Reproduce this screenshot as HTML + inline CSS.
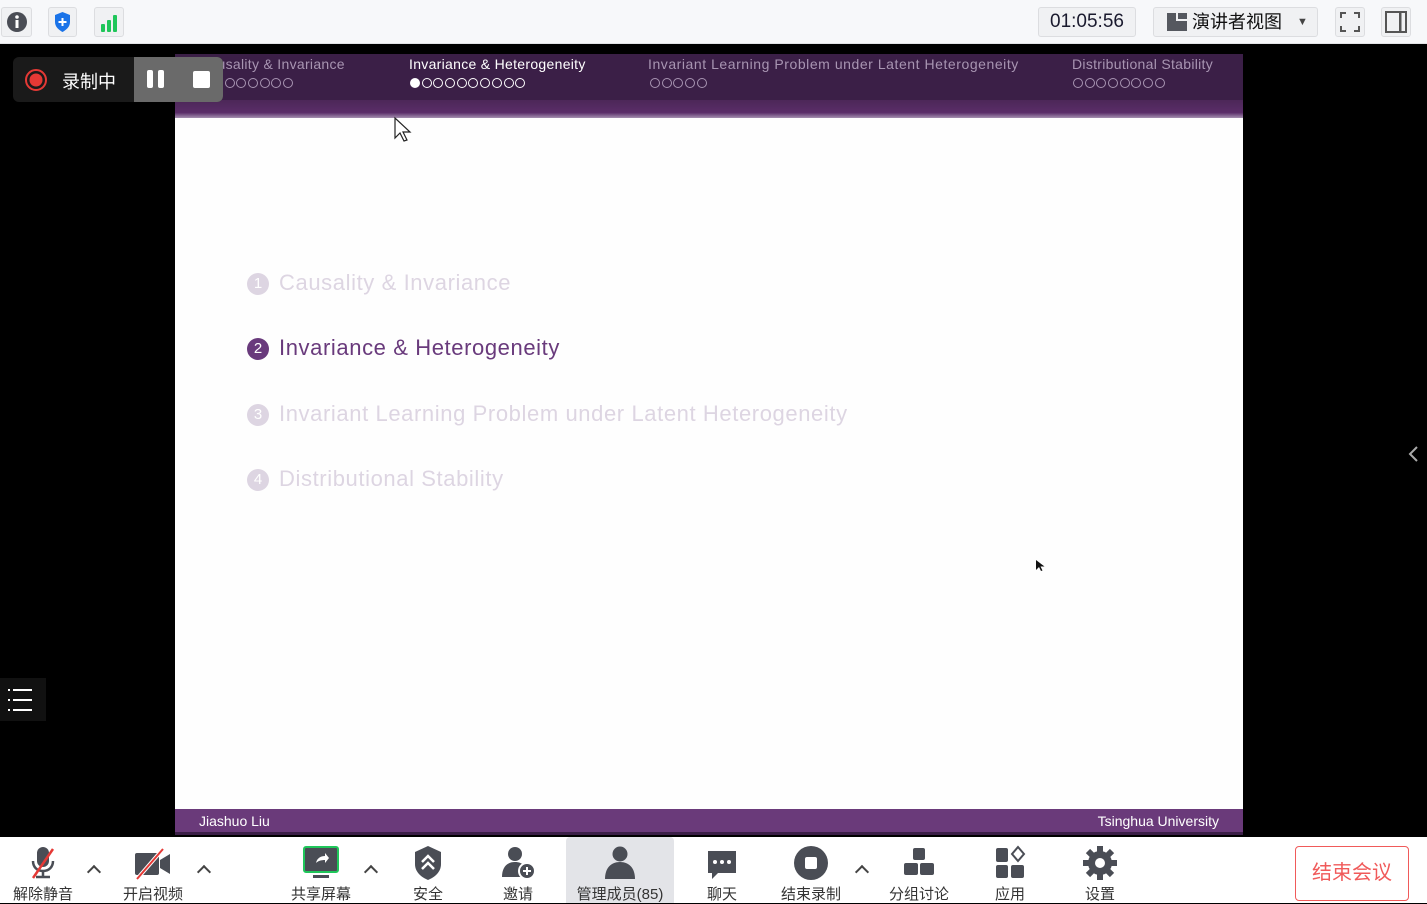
<!DOCTYPE html>
<html><head><meta charset="utf-8"><style>
*{margin:0;padding:0;box-sizing:border-box}
body{width:1427px;height:903px;overflow:hidden;background:#000;font-family:"Liberation Sans","Noto Sans CJK SC",sans-serif;position:relative}
.abs{position:absolute}
#top{left:0;top:0;width:1427px;height:44px;background:#f7f8fa;border-bottom:1px solid #e2e3e6}
.tb{position:absolute;top:7px;height:30px;border:1px solid #dcdde0;background:#f0f1f3;border-radius:3px}
#slide{left:175px;top:54px;width:1068px;height:781px;background:#fefefe}
#hdr{left:0;top:0;width:1068px;height:46px;background:#3b1f47}
#band{left:0;top:46px;width:1068px;height:18px;background:linear-gradient(#4c2758,#5a2d68 70%,#a58fb0)}
.sec{position:absolute;top:2px;font-size:14px;color:#a895b2;letter-spacing:.3px;white-space:nowrap}
.dots{position:absolute;top:24px;height:10px;white-space:nowrap;font-size:0}
.dots i{display:inline-block;width:10px;height:10px;border:1px solid #a895b2;border-radius:50%;margin-right:1.7px}
.dots.w i{border-color:#fff}
.dots.w i.f{background:#fff}
.it{position:absolute;left:104px;font-size:22px;color:#ddd5e2;letter-spacing:.6px;white-space:nowrap}
.num{position:absolute;left:-32px;top:3px;width:22px;height:22px;border-radius:50%;background:#ddd5e2;color:#fff;font-size:15px;text-align:center;line-height:22px;letter-spacing:0}
#foot{left:0;top:755px;width:1068px;height:23px;background:#6a3a7a;color:#fff;font-size:14px}
#foot2{left:0;top:778px;width:1068px;height:3px;background:#3b1f47}
#bar{left:0;top:837px;width:1427px;height:66px;background:#fff}
.btn{position:absolute;top:0;height:66px;text-align:center;font-size:15px;color:#333}
.btn span{position:absolute;bottom:-1px;left:0;right:0;white-space:nowrap}
.car{position:absolute;top:30px;width:10px;height:10px;border-left:2px solid #444;border-top:2px solid #444;transform:rotate(45deg)}
</style></head><body>
<div id="top" class="abs">
 <div class="tb" style="left:1px;width:31px"><svg width="29" height="28"><circle cx="15" cy="14" r="10" fill="#4a4d55"/><rect x="13.5" y="12" width="3" height="8" fill="#fff"/><circle cx="15" cy="9" r="1.8" fill="#fff"/></svg></div>
 <div class="tb" style="left:48px;width:29px"><svg width="27" height="28"><path d="M13.5 4 L21 7 V14 C21 19 17 22 13.5 24 C10 22 6 19 6 14 V7 Z" fill="#1a73e8"/><path d="M13.5 10v8M9.5 14h8" stroke="#fff" stroke-width="2"/></svg></div>
 <div class="tb" style="left:94px;width:30px"><svg width="28" height="28"><rect x="6" y="16" width="4" height="8" rx="1" fill="#1fc65a"/><rect x="12" y="12" width="4" height="12" rx="1" fill="#1fc65a"/><rect x="18" y="7" width="4" height="17" rx="1" fill="#1fc65a"/></svg></div>
 <div class="tb" style="left:1038px;width:98px;font-size:19px;color:#1a1a2e;text-align:center;line-height:28px">01:05:56</div>
 <div class="tb" style="left:1153px;width:165px;font-size:18px;color:#111;line-height:28px"><svg width="24" height="28" style="position:absolute;left:12px;top:0"><path d="M1 5h9v8h11v10H1z" fill="#55585f"/><rect x="12" y="5" width="9" height="6" fill="#55585f"/></svg><span style="position:absolute;left:38px">演讲者视图</span><span style="position:absolute;left:143px;top:0;font-size:11px;color:#444">▼</span></div>
 <div class="tb" style="left:1335px;width:30px"><svg width="28" height="28"><path d="M5 10V5h5M18 5h5v5M23 18v5h-5M10 23H5v-5" fill="none" stroke="#555" stroke-width="2"/></svg></div>
 <div class="tb" style="left:1381px;width:30px"><svg width="28" height="28"><rect x="4" y="4" width="20" height="20" fill="none" stroke="#555" stroke-width="2"/><rect x="17" y="4" width="2.5" height="20" fill="#555"/></svg></div>
</div>

<div id="slide" class="abs">
 <div id="hdr" class="abs">
  <div class="sec" style="left:24px">Causality &amp; Invariance</div><div class="dots" style="left:38px"><i></i><i></i><i></i><i></i><i></i><i></i><i></i></div>
  <div class="sec" style="left:234px;color:#fff">Invariance &amp; Heterogeneity</div><div class="dots w" style="left:235px"><i class="f"></i><i></i><i></i><i></i><i></i><i></i><i></i><i></i><i></i><i></i></div>
  <div class="sec" style="left:473px;letter-spacing:.55px">Invariant Learning Problem under Latent Heterogeneity</div><div class="dots" style="left:475px"><i></i><i></i><i></i><i></i><i></i></div>
  <div class="sec" style="left:897px">Distributional Stability</div><div class="dots" style="left:898px"><i></i><i></i><i></i><i></i><i></i><i></i><i></i><i></i></div>
 </div>
 <div id="band" class="abs"></div>
 <div class="it" style="top:216px">Causality &amp; Invariance<div class="num">1</div></div>
 <div class="it" style="top:281px;color:#693a7c">Invariance &amp; Heterogeneity<div class="num" style="background:#693a7c">2</div></div>
 <div class="it" style="top:347px">Invariant Learning Problem under Latent Heterogeneity<div class="num">3</div></div>
 <div class="it" style="top:412px">Distributional Stability<div class="num">4</div></div>
 <div id="foot" class="abs"><span style="position:absolute;left:24px;top:4px">Jiashuo Liu</span><span style="position:absolute;right:24px;top:4px">Tsinghua University</span></div>
 <div id="foot2" class="abs"></div>
 <svg class="abs" style="left:218px;top:62px" width="20" height="28"><path d="M2 2v20l5-5 4 8 3-1-4-8h7z" fill="#fff" stroke="#222" stroke-width="1.2"/></svg>
 <svg class="abs" style="left:860px;top:505px" width="10" height="14"><path d="M1 1v10l3-3 2 4 1.5-.5-2-4h4z" fill="#111"/></svg>
</div>

<div class="abs" style="left:13px;top:57px;width:210px;height:45px;background:#1a1a1a;border-radius:6px;overflow:hidden">
 <div class="abs" style="left:121px;top:0;width:89px;height:45px;background:#6a6a6a"></div>
 <svg class="abs" style="left:11px;top:11px" width="24" height="24"><circle cx="12" cy="12" r="10" fill="none" stroke="#e53935" stroke-width="2"/><circle cx="12" cy="12" r="6.5" fill="#e53935"/></svg>
 <span class="abs" style="left:49px;top:11px;color:#fff;font-size:18px">录制中</span>
 <div class="abs" style="left:134px;top:13px;width:6px;height:18px;background:#fff;border-radius:2px"></div>
 <div class="abs" style="left:145px;top:13px;width:6px;height:18px;background:#fff;border-radius:2px"></div>
 <div class="abs" style="left:180px;top:14px;width:17px;height:17px;background:#fff;border-radius:2px"></div>
</div>
<div class="abs" style="left:0;top:678px;width:46px;height:43px;background:#111"><svg width="46" height="43"><g stroke="#fff" stroke-width="2"><path d="M13 12h19M13 22h19M13 32h19"/><path d="M8 12h2M8 22h2M8 32h2"/></g></svg></div>
<svg class="abs" style="left:1406px;top:445px" width="14" height="18"><path d="M11 2L4 9l7 7" fill="none" stroke="#aaa" stroke-width="2"/></svg>

<div id="bar" class="abs">
 <div class="btn" style="left:6px;width:74px"><svg width="40" height="40" style="margin-top:6px"><rect x="14" y="4" width="12" height="20" rx="6" fill="#4a4d55"/><path d="M10 18c0 6 4 10 10 10s10-4 10-10" fill="none" stroke="#4a4d55" stroke-width="2.5"/><path d="M20 28v5M13 34h14" stroke="#4a4d55" stroke-width="2.5"/><path d="M10 35L30 6" stroke="#e53935" stroke-width="2.5"/></svg><span>解除静音</span></div>
 <div class="car" style="left:89px"></div>
 <div class="btn" style="left:116px;width:74px"><svg width="40" height="40" style="margin-top:6px"><rect x="2" y="10" width="24" height="22" rx="2" fill="#4a4d55"/><path d="M27 17l10-6v20l-10-6z" fill="#4a4d55"/><path d="M4 36L30 6" stroke="#fff" stroke-width="4"/><path d="M4 36L30 6" stroke="#e53935" stroke-width="2"/></svg><span>开启视频</span></div>
 <div class="car" style="left:199px"></div>
 <div class="btn" style="left:284px;width:74px"><svg width="40" height="40" style="margin-top:6px"><rect x="3" y="4" width="34" height="25" rx="2" fill="#4a4d55" stroke="#1fc65a" stroke-width="2"/><path d="M15 20c1-5 5-7 9-7v-3l4 5-4 5v-3c-4 0-7 1-9 3z" fill="#fff"/><rect x="12" y="32" width="16" height="3" fill="#4a4d55"/></svg><span>共享屏幕</span></div>
 <div class="car" style="left:366px"></div>
 <div class="btn" style="left:400px;width:56px"><svg width="40" height="40" style="margin-top:6px"><path d="M20 3l13 6v12c0 8-6 13-13 16C13 34 7 29 7 21V9z" fill="#4a4d55"/><path d="M14 19l6-6 6 6M14 26l6-6 6 6" fill="none" stroke="#fff" stroke-width="2.5"/></svg><span>安全</span></div>
 <div class="btn" style="left:490px;width:56px"><svg width="40" height="40" style="margin-top:6px"><circle cx="17" cy="11" r="7" fill="#4a4d55"/><path d="M4 34c0-10 5-15 13-15s13 5 13 15z" fill="#4a4d55"/><circle cx="29" cy="28" r="8" fill="#4a4d55" stroke="#fff" stroke-width="2"/><path d="M29 24v8M25 28h8" stroke="#fff" stroke-width="2"/></svg><span>邀请</span></div>
 <div class="btn" style="left:566px;width:108px;background:#e3e4e8;border-radius:4px 4px 0 0"><svg width="40" height="40" style="margin-top:6px"><circle cx="20" cy="11" r="7.5" fill="#4a4d55"/><path d="M5 36c0-11 6-17 15-17s15 6 15 17z" fill="#4a4d55"/></svg><span>管理成员(85)</span></div>
 <div class="btn" style="left:694px;width:56px"><svg width="40" height="40" style="margin-top:6px"><path d="M6 8h28v22H16l-6 6v-6H6z" fill="#4a4d55"/><circle cx="13" cy="19" r="2" fill="#fff"/><circle cx="20" cy="19" r="2" fill="#fff"/><circle cx="27" cy="19" r="2" fill="#fff"/></svg><span>聊天</span></div>
 <div class="btn" style="left:774px;width:74px"><svg width="40" height="40" style="margin-top:6px"><circle cx="20" cy="20" r="17" fill="#4a4d55"/><rect x="14" y="14" width="12" height="12" rx="2" fill="#fff"/></svg><span>结束录制</span></div>
 <div class="car" style="left:857px"></div>
 <div class="btn" style="left:882px;width:74px"><svg width="40" height="40" style="margin-top:6px"><rect x="14" y="5" width="12" height="12" rx="2" fill="#4a4d55"/><rect x="5" y="20" width="14" height="12" rx="2" fill="#4a4d55"/><rect x="21" y="20" width="14" height="12" rx="2" fill="#4a4d55"/></svg><span>分组讨论</span></div>
 <div class="btn" style="left:982px;width:56px"><svg width="40" height="40" style="margin-top:6px"><rect x="6" y="5" width="12" height="14" rx="2" fill="#4a4d55"/><path d="M28 4l6 7-6 7-6-7z" fill="none" stroke="#4a4d55" stroke-width="2"/><rect x="6" y="22" width="12" height="13" rx="2" fill="#4a4d55"/><rect x="21" y="22" width="13" height="13" rx="2" fill="#4a4d55"/></svg><span>应用</span></div>
 <div class="btn" style="left:1072px;width:56px"><svg width="40" height="40" style="margin-top:6px"><g fill="#4a4d55"><circle cx="20" cy="20" r="12"/><rect x="17" y="3" width="6" height="34"/><rect x="3" y="17" width="34" height="6"/><rect x="17" y="3" width="6" height="34" transform="rotate(45 20 20)"/><rect x="17" y="3" width="6" height="34" transform="rotate(-45 20 20)"/></g><circle cx="20" cy="20" r="5" fill="#fff"/></svg><span>设置</span></div>
 <div class="abs" style="left:1295px;top:9px;width:114px;height:55px;border:1px solid #f05a5a;border-radius:4px;color:#f05a5a;font-size:20px;text-align:center;line-height:53px">结束会议</div>
</div>
</body></html>
